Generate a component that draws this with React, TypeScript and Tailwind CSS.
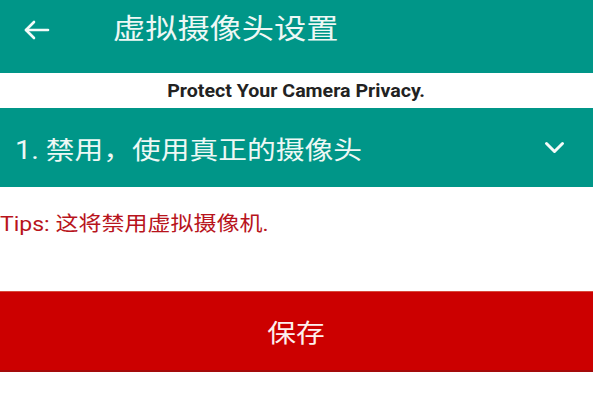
import React from "react";

const FONT = { fontFamily: 'Roboto, "Noto Sans CJK SC", "Noto Sans", sans-serif' };

export default function App() {
  return (
    <div className="w-[593px] h-[398px] bg-white overflow-hidden" style={FONT}>
      {/* Header */}
      <div className="h-[73px] bg-[#009688] flex items-start pt-[13px]">
        <div className="h-[34px] flex items-center">
          <svg className="ml-[23px]" width="27" height="20" viewBox="0 0 27 20" fill="none">
            <path d="M25 10H3" stroke="#f4fbf9" strokeWidth="2.6" strokeLinecap="round" />
            <path d="M11 2L3 10L11 18" stroke="#f4fbf9" strokeWidth="2.6" strokeLinecap="round" strokeLinejoin="round" />
          </svg>
          <span className="ml-[63px] inline-block origin-left scale-x-[1.15] text-[28px] leading-[34px] text-[#eef8f5] whitespace-nowrap">
            虚拟摄像头设置
          </span>
        </div>
      </div>

      {/* Subtitle band */}
      <div className="h-[35px] flex items-center justify-center">
        <span className="inline-block scale-x-[1.12] text-[17.5px] font-bold leading-[20px] text-[#222222] whitespace-nowrap">
          Protect Your Camera Privacy.
        </span>
      </div>

      {/* Dropdown */}
      <div className="h-[79px] bg-[#009688] flex items-center justify-between pl-[15px] pr-[28px]">
        <span className="mt-[6px] inline-block origin-left scale-x-[1.15] text-[25px] leading-[32px] text-[#eef8f5] whitespace-nowrap">
          1. 禁用，使用真正的摄像头
        </span>
        <svg width="21" height="14" viewBox="0 0 21 14" fill="none">
          <path d="M2.5 2.5L10.5 10.5L18.5 2.5" stroke="#f4fbf9" strokeWidth="3" strokeLinecap="round" strokeLinejoin="round" />
        </svg>
      </div>

      {/* Tips */}
      <div className="h-[104px] pt-[23px]">
        <span className="inline-block origin-left scale-x-[1.15] text-[20px] leading-[28px] text-[#b8141c] whitespace-nowrap">
          Tips: 这将禁用虚拟摄像机.
        </span>
      </div>

      {/* Save button */}
      <div className="h-[81px] bg-[#cc0000] border-t border-[#d84a3a] border-b-2 border-b-[#a50a0a] flex items-center justify-center">
        <span className="mt-[6px] inline-block scale-x-[1.15] text-[25px] leading-[32px] text-[#fdf0ee] whitespace-nowrap">
          保存
        </span>
      </div>
    </div>
  );
}
